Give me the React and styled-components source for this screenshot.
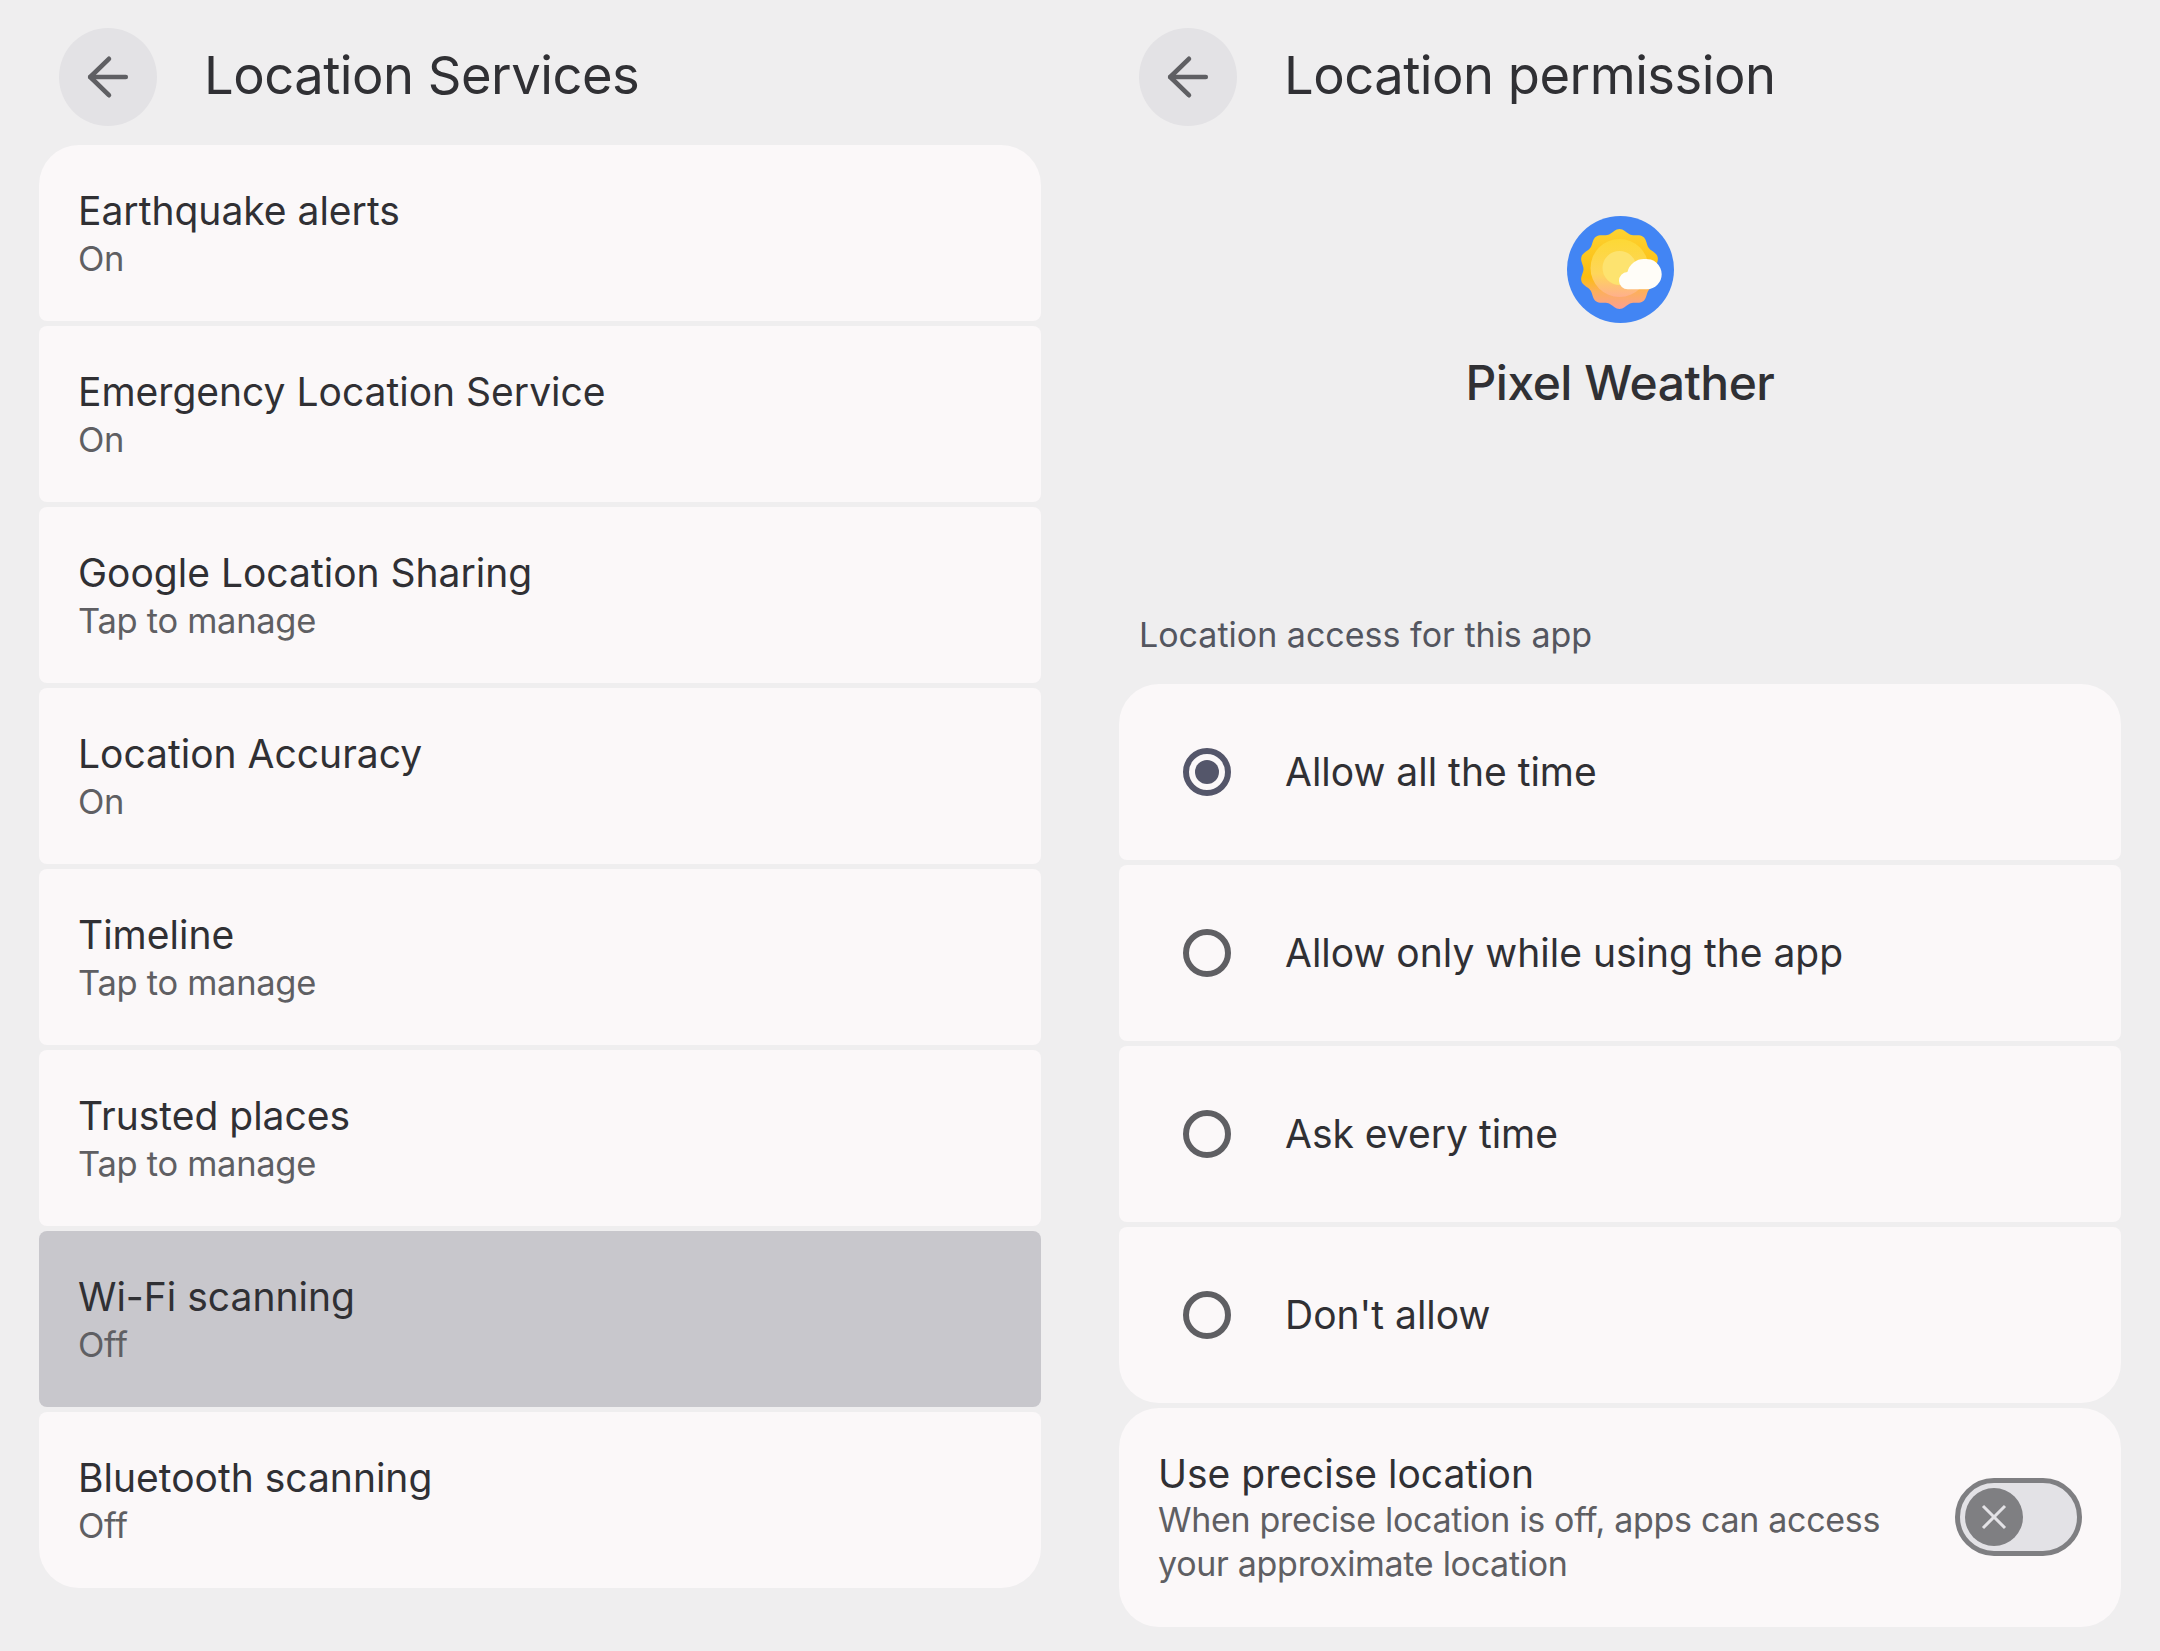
import React from 'react';
import styled, { createGlobalStyle } from 'styled-components';

const GlobalStyle = createGlobalStyle`
    html, body {
        margin: 0;
        padding: 0;
        background: #efeeef;
        font-family: Inter, "Noto Sans", sans-serif;
        color: #303034;
    }
`;

const Page = styled.main`
    display: grid;
    grid-template-columns: 1002px 1002px;
    gap: 78px;
    padding: 0 39px;
    width: 2160px;
    height: 1651px;
    box-sizing: border-box;
`;

const Column = styled.section`
    display: flex;
    flex-direction: column;
`;

const Header = styled.header`
    display: flex;
    align-items: center;
    gap: 47px;
    height: 98px;
    padding: 28px 0 19px 20px;
`;

const BackButton = styled.button`
    display: flex;
    align-items: center;
    justify-content: center;
    width: 98px;
    height: 98px;
    padding: 0;
    border: 0;
    border-radius: 50%;
    background: #e3e2e5;
    color: #5f5f63;
`;

const Title = styled.h1`
    margin: 0 0 4px;
    font-size: 52.5px;
    font-weight: 400;
    letter-spacing: -0.5px;
    line-height: 98px;
    color: #303034;
`;

const List = styled.div`
    display: flex;
    flex-direction: column;
    gap: 5px;
`;

const Row = styled.div`
    display: flex;
    flex-direction: column;
    justify-content: center;
    height: 176px;
    padding: 3px 39px 0;
    box-sizing: border-box;
    background: ${p => (p.$selected ? '#c8c7cc' : '#fbf8f9')};
    border-radius: 8px;

    &:first-child {
        border-top-left-radius: 40px;
        border-top-right-radius: 40px;
    }
    &:last-child {
        border-bottom-left-radius: 40px;
        border-bottom-right-radius: 40px;
    }
`;

const RowTitle = styled.div`
    font-size: 39px;
    line-height: 48px;
    color: #303034;
`;

const RowSub = styled.div`
    font-size: 34.5px;
    line-height: 48px;
    letter-spacing: -0.3px;
    color: #5f5f63;
`;

const AppInfo = styled.div`
    display: flex;
    flex-direction: column;
    align-items: center;
    gap: 29px;
    padding-top: 71px;
    height: 466px;
    box-sizing: border-box;
`;

const AppName = styled.div`
    font-size: 48px;
    line-height: 62px;
    font-weight: 500;
    letter-spacing: -0.5px;
    color: #303034;
`;

const SectionLabel = styled.div`
    height: 73px;
    padding-left: 20px;
    font-size: 34px;
    line-height: 47px;
    color: #54565f;
`;

const RadioRow = styled(Row)`
    flex-direction: row;
    align-items: center;
    justify-content: flex-start;
    gap: 54px;
    padding: 0 0 0 64px;
`;

const Radio = styled.span`
    display: flex;
    align-items: center;
    justify-content: center;
    flex: none;
    width: 48px;
    height: 48px;
    box-sizing: border-box;
    border-radius: 50%;
    border: 6px solid ${p => (p.$checked ? '#54566a' : '#5f5f63')};

    &::after {
        content: '';
        display: ${p => (p.$checked ? 'block' : 'none')};
        width: 24px;
        height: 24px;
        border-radius: 50%;
        background: #54566a;
    }
`;

const OptionLabel = styled.div`
    font-size: 39px;
    line-height: 48px;
    color: #303034;
`;

const PreciseCard = styled.div`
    display: flex;
    align-items: center;
    justify-content: space-between;
    height: 219px;
    margin-top: 5px;
    padding: 0 39px;
    box-sizing: border-box;
    background: #fbf8f9;
    border-radius: 40px;
`;

const PreciseText = styled.div`
    width: 745px;
    padding-top: 1px;
`;

const PreciseDesc = styled.div`
    font-size: 34px;
    line-height: 44px;
    letter-spacing: -0.3px;
    color: #5f5f63;
`;

const Toggle = styled.div`
    display: flex;
    align-items: center;
    flex: none;
    width: 127px;
    height: 78px;
    margin-bottom: 1px;
    padding-left: 5px;
    box-sizing: border-box;
    border: 5px solid #7f7f82;
    border-radius: 39px;
    background: #e3e2e6;
`;

const Thumb = styled.div`
    display: flex;
    align-items: center;
    justify-content: center;
    width: 58px;
    height: 58px;
    border-radius: 50%;
    background: #7f7f82;
`;

const BackIcon = () => (
    <svg width="56" height="56" viewBox="0 0 24 24" fill="none" stroke="currentColor" strokeWidth="2" strokeLinecap="round" strokeLinejoin="round">
        <path d="M19.6 12H4.4" />
        <path d="M12.4 4.2 4.4 12l8 7.8" />
    </svg>
);

// soft scallops around the sun
function scallopPath(cx, cy, r, amp, lobes) {
    const pts = [];
    for (let i = 0; i < 180; i++) {
        const a = (i / 180) * Math.PI * 2;
        const rad = r + amp * Math.cos(a * lobes);
        pts.push(`${(cx + rad * Math.sin(a)).toFixed(2)} ${(cy - rad * Math.cos(a)).toFixed(2)}`);
    }
    return `M${pts.join('L')}Z`;
}

const WeatherIcon = () => (
    <svg width="107" height="107" viewBox="0 0 107 107">
        <defs>
            <linearGradient id="sunOuter" x1="0" y1="0" x2="0" y2="1">
                <stop offset="0" stopColor="#fdd231" />
                <stop offset="0.6" stopColor="#fcbd0f" />
                <stop offset="0.78" stopColor="#fdb05a" />
                <stop offset="1" stopColor="#fb9f93" />
            </linearGradient>
            <linearGradient id="sunInner" x1="0" y1="0" x2="0" y2="1">
                <stop offset="0" stopColor="#fdd835" />
                <stop offset="0.6" stopColor="#fed65a" />
                <stop offset="1" stopColor="#ffaf8c" />
            </linearGradient>
        </defs>
        <circle cx="53.5" cy="53.5" r="53.5" fill="#4285f4" />
        <path d={scallopPath(52.5, 53, 38, 2, 10)} fill="url(#sunOuter)" />
        <circle cx="52.5" cy="52" r="29" fill="url(#sunInner)" />
        <circle cx="52.5" cy="52" r="17" fill="#fde36f" />
        <path d="M61 73.3a8.7 8.7 0 0 1 -0.6 -17.4 a17 17 0 0 1 17 -12.9 a15.5 15.5 0 0 1 17.3 15.3 a15 15 0 0 1 -14.7 15Z" fill="#fffdf8" />
    </svg>
);

const CloseIcon = () => (
    <svg width="26" height="26" viewBox="0 0 26 26" fill="none" stroke="#e3e2e6" strokeWidth="3">
        <path d="M2 2 24 24M24 2 2 24" />
    </svg>
);

const services = [
    { title: 'Earthquake alerts', sub: 'On' },
    { title: 'Emergency Location Service', sub: 'On' },
    { title: 'Google Location Sharing', sub: 'Tap to manage' },
    { title: 'Location Accuracy', sub: 'On' },
    { title: 'Timeline', sub: 'Tap to manage' },
    { title: 'Trusted places', sub: 'Tap to manage' },
    { title: 'Wi-Fi scanning', sub: 'Off', selected: true },
    { title: 'Bluetooth scanning', sub: 'Off' },
];

const options = ['Allow all the time', 'Allow only while using the app', 'Ask every time', "Don't allow"];

export default function App() {
    return (
        <>
            <GlobalStyle />
            <Page>
                <Column>
                    <Header>
                        <BackButton aria-label="Back"><BackIcon /></BackButton>
                        <Title>Location Services</Title>
                    </Header>
                    <List>
                        {services.map(s => (
                            <Row key={s.title} $selected={s.selected}>
                                <RowTitle>{s.title}</RowTitle>
                                <RowSub>{s.sub}</RowSub>
                            </Row>
                        ))}
                    </List>
                </Column>
                <Column>
                    <Header>
                        <BackButton aria-label="Back"><BackIcon /></BackButton>
                        <Title>Location permission</Title>
                    </Header>
                    <AppInfo>
                        <WeatherIcon />
                        <AppName>Pixel Weather</AppName>
                    </AppInfo>
                    <SectionLabel>Location access for this app</SectionLabel>
                    <List>
                        {options.map((o, i) => (
                            <RadioRow key={o}>
                                <Radio $checked={i === 0} />
                                <OptionLabel>{o}</OptionLabel>
                            </RadioRow>
                        ))}
                    </List>
                    <PreciseCard>
                        <PreciseText>
                            <RowTitle>Use precise location</RowTitle>
                            <PreciseDesc>When precise location is off, apps can access your approximate location</PreciseDesc>
                        </PreciseText>
                        <Toggle>
                            <Thumb><CloseIcon /></Thumb>
                        </Toggle>
                    </PreciseCard>
                </Column>
            </Page>
        </>
    );
}
